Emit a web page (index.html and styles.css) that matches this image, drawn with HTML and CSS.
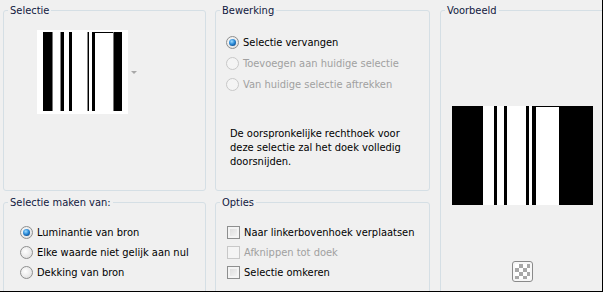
FILE: index.html
```html
<!DOCTYPE html>
<html>
<head>
<meta charset="utf-8">
<link rel="stylesheet" href="styles.css">
</head>
<body>
<div class="dlg">
  <div class="col col-left">
    <fieldset class="grp grp-top">
      <legend>Selectie</legend>
      <div class="thumb-row">
        <svg class="thumb" width="91" height="84" viewBox="0 0 91 84">
          <rect x="0" y="0" width="91" height="84" fill="#fff"/>
          <rect x="6" y="2" width="9" height="79" fill="#000"/>
          <rect x="15" y="2" width="1" height="79" fill="#777"/>
          <rect x="23" y="2" width="1" height="79" fill="#888"/>
          <rect x="24" y="2" width="3" height="79" fill="#000"/>
          <rect x="32" y="2" width="3" height="79" fill="#000"/>
          <rect x="50" y="2" width="1" height="79" fill="#888"/>
          <rect x="51" y="2" width="1" height="79" fill="#000"/>
          <rect x="55" y="2" width="3" height="79" fill="#000"/>
          <rect x="58" y="2" width="18" height="1" fill="#000"/>
          <rect x="76" y="2" width="1" height="79" fill="#777"/>
          <rect x="77" y="2" width="8" height="79" fill="#000"/>
        </svg>
        <span class="drop"></span>
      </div>
    </fieldset>
    <fieldset class="grp grp-bottom">
      <legend>Selectie maken van:</legend>
      <div class="opts opts-src">
        <div class="opt"><span class="radio on"></span><span>Luminantie van bron</span></div>
        <div class="opt"><span class="radio"></span><span>Elke waarde niet gelijk aan nul</span></div>
        <div class="opt"><span class="radio"></span><span>Dekking van bron</span></div>
      </div>
    </fieldset>
  </div>
  <div class="col col-mid">
    <fieldset class="grp grp-top">
      <legend>Bewerking</legend>
      <div class="opts opts-op">
        <div class="opt opt-tall"><span class="radio on"></span><span>Selectie vervangen</span></div>
        <div class="opt opt-tall dis"><span class="radio"></span><span>Toevoegen aan huidige selectie</span></div>
        <div class="opt opt-tall dis"><span class="radio"></span><span>Van huidige selectie aftrekken</span></div>
      </div>
      <p class="note">De oorspronkelijke rechthoek voor deze selectie zal het doek volledig doorsnijden.</p>
    </fieldset>
    <fieldset class="grp grp-bottom">
      <legend>Opties</legend>
      <div class="opts opts-chk">
        <div class="opt"><span class="check"></span><span>Naar linkerbovenhoek verplaatsen</span></div>
        <div class="opt dis"><span class="check"></span><span>Afknippen tot doek</span></div>
        <div class="opt"><span class="check"></span><span>Selectie omkeren</span></div>
      </div>
    </fieldset>
  </div>
  <div class="col col-right">
    <fieldset class="grp grp-full">
      <legend>Voorbeeld</legend>
      <div class="preview-wrap">
        <svg class="preview" width="141" height="99" viewBox="0 0 141 99">
          <rect x="0" y="0" width="141" height="99" fill="#fff"/>
          <rect x="0" y="0" width="31" height="99" fill="#000"/>
          <rect x="42" y="0" width="3" height="99" fill="#000"/>
          <rect x="52" y="0" width="3" height="99" fill="#000"/>
          <rect x="74" y="0" width="3" height="99" fill="#000"/>
          <rect x="80" y="0" width="4" height="99" fill="#000"/>
          <rect x="84" y="0" width="23" height="1" fill="#000"/>
          <rect x="107" y="0" width="34" height="99" fill="#000"/>
        </svg>
        <span class="checker-btn"><span class="checker"></span></span>
      </div>
    </fieldset>
  </div>
</div>
</body>
</html>
```

FILE: styles.css
```css
* { box-sizing: border-box; }
html, body { margin: 0; padding: 0; background: #f0f0f0; }
body {
  font-family: "DejaVu Sans", sans-serif;
  font-stretch: condensed;
  font-size: 11px;
  color: #000;
}
.dlg {
  width: 603px;
  height: 292px;
  overflow: hidden;
  border-right: 1px solid #000;
  border-bottom: 1px solid #000;
  display: flex;
  gap: 9px;
  padding: 4px 0 0 3px;
}
.col { display: flex; flex-direction: column; gap: 5px; flex: none; }
.col-left { width: 203px; }
.col-mid { width: 215px; }
.col-right { width: 180px; margin-left: 1px; }
.grp {
  margin: 0;
  padding: 0;
  min-width: 0;
  border: 1px solid #d5dfe5;
  border-radius: 3px;
  flex: none;
}
.grp-top { height: 187px; }
.grp-bottom { height: 140px; }
.grp-full { height: 330px; }
legend {
  margin-left: 4px;
  padding: 0 2px;
  line-height: 13px;
  color: #101840;
}
.thumb-row {
  display: flex;
  align-items: center;
  gap: 3px;
  padding: 13px 0 0 33px;
}
.thumb { display: block; }
.drop {
  width: 0; height: 0;
  border-left: 3px solid transparent;
  border-right: 3px solid transparent;
  border-top: 3px solid #a8a8a8;
}
.opts { display: flex; flex-direction: column; }
.opts-src { padding: 13px 0 0 16px; }
.opts-op { padding: 15px 0 0 10px; }
.opts-chk { padding: 13px 0 0 11px; }
.opt { display: flex; align-items: center; gap: 4px; height: 20px; }
.opt-tall { height: 21px; }
.opt.dis { color: #a0a0a0; }
.radio {
  position: relative;
  width: 13px; height: 13px;
  flex: none;
  border-radius: 50%;
  border: 1px solid #8e8f8f;
  background: radial-gradient(circle at 40% 40%, #ffffff 0, #ececec 50%, #d6d6d6 100%);
}
.radio.on::after {
  content: "";
  position: absolute;
  left: 2px; top: 2px;
  width: 7px; height: 7px;
  border-radius: 50%;
  background: radial-gradient(circle at 40% 35%, #9fdcff 0, #2a8ad8 45%, #0e4c8c 80%, #1a2f55 100%);
}
.dis .radio { border-color: #c8c8c8; background: #f4f4f4; }
.check {
  width: 13px; height: 13px;
  flex: none;
  border: 1px solid #8e8f8f;
  background: linear-gradient(135deg, #d8d8d8, #f8f8f8);
  box-shadow: inset 0 0 0 2px #f4f4f4;
}
.dis .check { border-color: #c8c8c8; background: #f4f4f4; box-shadow: none; }
.note {
  margin: 32px 0 0 14px;
  width: 190px;
  line-height: 14px;
}
.preview-wrap {
  display: flex;
  flex-direction: column;
  align-items: center;
  width: 163px;
  padding-top: 89px;
  gap: 56px;
}
.preview { display: block; }
.checker-btn {
  width: 21px; height: 21px;
  border: 1px solid #8a8a8a;
  border-radius: 3px;
  background: #f7f7f7;
  padding: 2px;
  display: block;
}
.checker {
  display: block;
  width: 15px; height: 15px;
  background: repeating-conic-gradient(#a8a8a8 0 25%, #ffffff 0 50%) 0 0 / 8px 8px;
}
```
